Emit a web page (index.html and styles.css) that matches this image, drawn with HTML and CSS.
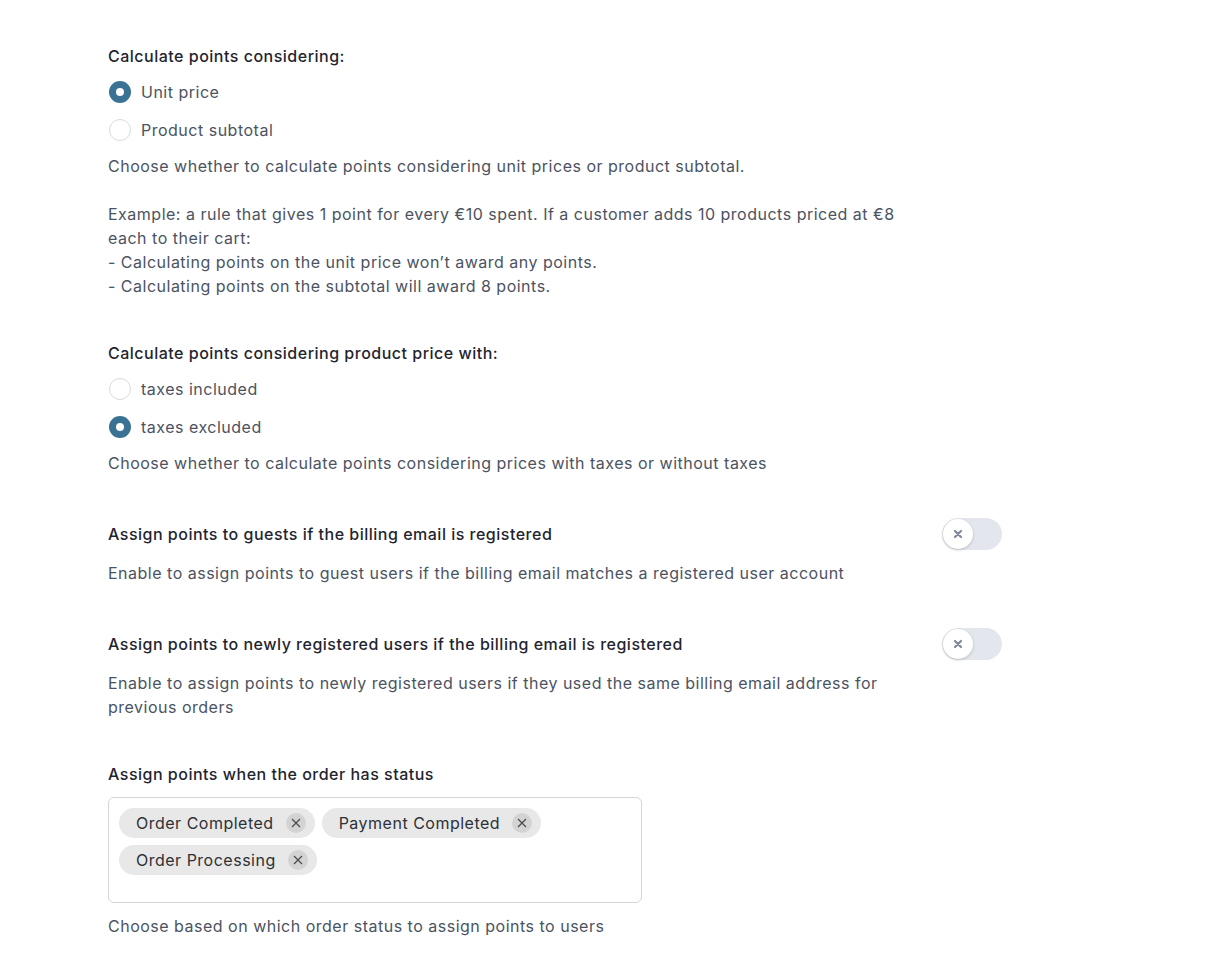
FILE: index.html
```html
<!DOCTYPE html>
<html lang="en">
<head>
<meta charset="UTF-8">
<title>Points settings</title>
<link rel="stylesheet" href="styles.css">
</head>
<body>
<div class="settings">

  <!-- calculation base -->
  <div class="field">
    <div class="field-title">Calculate points considering:</div>
    <div class="options">
      <label class="option"><span class="radio checked"></span>Unit price</label>
      <label class="option"><span class="radio"></span>Product subtotal</label>
    </div>
    <div class="desc">
      <p>Choose whether to calculate points considering unit prices or product subtotal.</p>
      <p>Example: a rule that gives 1 point for every €10 spent. If a customer adds 10 products priced at €8 each to their cart:<br>
      - Calculating points on the unit price won’t award any points.<br>
      - Calculating points on the subtotal will award 8 points.</p>
    </div>
  </div>

  <!-- taxes -->
  <div class="field">
    <div class="field-title">Calculate points considering product price with:</div>
    <div class="options">
      <label class="option"><span class="radio"></span>taxes included</label>
      <label class="option"><span class="radio checked"></span>taxes excluded</label>
    </div>
    <div class="desc">
      <p>Choose whether to calculate points considering prices with taxes or without taxes</p>
    </div>
  </div>

  <!-- guests -->
  <div class="field">
    <div class="toggle-row">
      <div class="field-title">Assign points to guests if the billing email is registered</div>
      <span class="toggle"><span class="knob"><svg width="10" height="10" viewBox="0 0 10 10"><path d="M2 2L8 8M8 2L2 8" stroke="currentColor" stroke-width="2.2" stroke-linecap="round"/></svg></span></span>
    </div>
    <div class="desc desc-toggle">
      <p>Enable to assign points to guest users if the billing email matches a registered user account</p>
    </div>
  </div>

  <!-- new users -->
  <div class="field">
    <div class="toggle-row">
      <div class="field-title">Assign points to newly registered users if the billing email is registered</div>
      <span class="toggle"><span class="knob"><svg width="10" height="10" viewBox="0 0 10 10"><path d="M2 2L8 8M8 2L2 8" stroke="currentColor" stroke-width="2.2" stroke-linecap="round"/></svg></span></span>
    </div>
    <div class="desc desc-toggle">
      <p>Enable to assign points to newly registered users if they used the same billing email address for previous orders</p>
    </div>
  </div>

  <!-- order status -->
  <div class="field">
    <div class="field-title">Assign points when the order has status</div>
    <div class="tag-box">
      <span class="tag">Order Completed <span class="tag-x"><svg width="10" height="10" viewBox="0 0 10 10"><path d="M1 1L9 9M9 1L1 9" stroke="currentColor" stroke-width="1.2"/></svg></span></span>
      <span class="tag">Payment Completed <span class="tag-x"><svg width="10" height="10" viewBox="0 0 10 10"><path d="M1 1L9 9M9 1L1 9" stroke="currentColor" stroke-width="1.2"/></svg></span></span>
      <span class="tag">Order Processing <span class="tag-x"><svg width="10" height="10" viewBox="0 0 10 10"><path d="M1 1L9 9M9 1L1 9" stroke="currentColor" stroke-width="1.2"/></svg></span></span>
    </div>
    <div class="desc desc-box">
      <p>Choose based on which order status to assign points to users</p>
    </div>
  </div>

</div>
</body>
</html>
```

FILE: styles.css
```css
* { margin: 0; padding: 0; box-sizing: border-box; }

body {
  background: #fff;
  font-family: 'Inter', 'Liberation Sans', sans-serif;
  font-size: 16px;
  line-height: 24px;
  letter-spacing: 0.5px;
  color: #4b5362;
}

.settings {
  width: 894px;
  margin-left: 108px;
  padding-top: 44px;
  display: flex;
  flex-direction: column;
  gap: 43px;
}

.field-title {
  color: #1f2530;
  font-weight: 500;
}

/* === RADIOS === */
.options {
  display: flex;
  flex-direction: column;
  gap: 14px;
  margin: 12px 0;
}
.option {
  display: flex;
  align-items: center;
  gap: 10px;
  color: #4b5362;
}
.radio {
  width: 22px;
  height: 22px;
  border-radius: 50%;
  border: 1px solid #d7dbe0;
  background: #fff;
  margin-left: 1px;
  flex-shrink: 0;
}
.radio.checked {
  border: 7px solid #3a7293;
  background: #fff;
}

.desc { max-width: 800px; }
.desc p + p { margin-top: 24px; }
.desc-toggle { margin-top: 11px; }
.desc-box { margin-top: 11px; }

/* === TOGGLES === */
.toggle-row {
  display: flex;
  justify-content: space-between;
  align-items: center;
  height: 32px;
}
.toggle {
  width: 60px;
  height: 32px;
  border-radius: 16px;
  background: #e3e7ed;
  padding: 1px;
  display: flex;
}
.knob {
  width: 30px;
  height: 30px;
  border-radius: 50%;
  background: #fff;
  box-shadow: 0 1px 3px rgba(0,0,0,0.2);
  color: #7f889a;
  display: flex;
  align-items: center;
  justify-content: center;
}

/* === TAGS === */
.tag-box {
  margin-top: 11px;
  width: 534px;
  height: 106px;
  border: 1px solid #d3d5d8;
  border-radius: 6px;
  padding: 10px;
  display: flex;
  flex-wrap: wrap;
  align-content: flex-start;
  gap: 7px;
}
.tag {
  display: inline-flex;
  align-items: center;
  height: 30px;
  padding: 0 9px 0 17px;
  border-radius: 15px;
  background: #e8e8e8;
  color: #2e3136;
  gap: 12px;
}
.tag-x {
  width: 20px;
  height: 20px;
  border-radius: 50%;
  background: #d3d3d3;
  color: #4a4a4a;
  display: flex;
  align-items: center;
  justify-content: center;
}
```
